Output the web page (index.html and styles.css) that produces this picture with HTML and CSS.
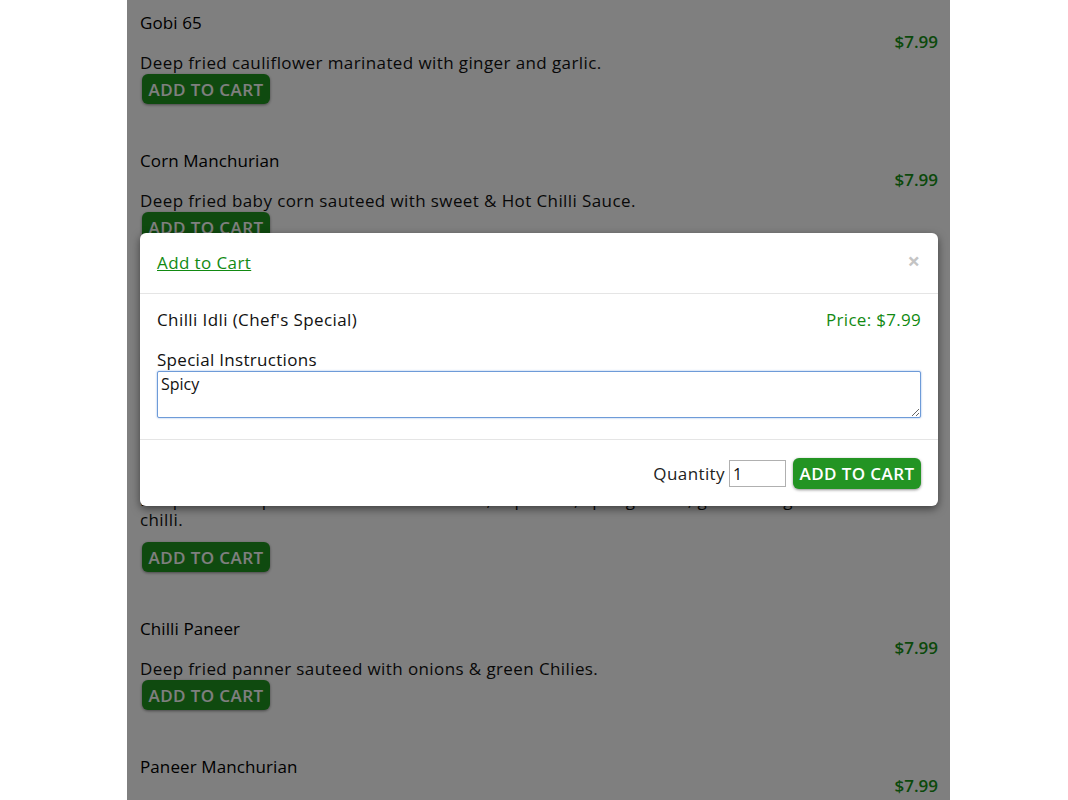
FILE: index.html
```html
<!DOCTYPE html>
<html>
<head>
<meta charset="utf-8">
<title>Menu</title>
<link rel="stylesheet" href="styles.css">
</head>
<body>
<div class="menu">
  <div class="item">
    <div class="item-main">
      <h4 class="name">Gobi 65</h4>
      <p class="desc">Deep fried cauliflower marinated with ginger and garlic.</p>
      <button class="btn">ADD TO CART</button>
    </div>
    <div class="price">$7.99</div>
  </div>
  <div class="item">
    <div class="item-main">
      <h4 class="name">Corn Manchurian</h4>
      <p class="desc">Deep fried baby corn sauteed with sweet &amp; Hot Chilli Sauce.</p>
      <button class="btn">ADD TO CART</button>
    </div>
    <div class="price">$7.99</div>
  </div>
  <div class="item">
    <div class="item-main">
      <h4 class="name">Baby Corn Pepper Fry</h4>
      <p class="desc">Baby corn tossed with crushed black pepper and curry leaves.</p>
      <button class="btn">ADD TO CART</button>
    </div>
    <div class="price">$7.99</div>
  </div>
  <div class="item item-tall">
    <div class="item-main">
      <h4 class="name">Chilli Idli (Chef's Special)</h4>
      <p class="desc">Deep fried idli pieces sauteed with onions, capsicum, spring onion, garlic and green<br>chilli.</p>
      <button class="btn">ADD TO CART</button>
    </div>
    <div class="price">$7.99</div>
  </div>
  <div class="item">
    <div class="item-main">
      <h4 class="name">Chilli Paneer</h4>
      <p class="desc">Deep fried panner sauteed with onions &amp; green Chilies.</p>
      <button class="btn">ADD TO CART</button>
    </div>
    <div class="price">$7.99</div>
  </div>
  <div class="item">
    <div class="item-main">
      <h4 class="name">Paneer Manchurian</h4>
      <p class="desc">Deep fried paneer sauteed with Manchurian sauce.</p>
      <button class="btn">ADD TO CART</button>
    </div>
    <div class="price">$7.99</div>
  </div>

  <div class="backdrop"></div>

  <div class="modal">
    <div class="modal-header">
      <a class="modal-title" href="#">Add to Cart</a>
      <span class="close">&times;</span>
    </div>
    <div class="modal-body">
      <div class="modal-row">
        <span class="dish">Chilli Idli (Chef's Special)</span>
        <span class="modal-price">Price: $7.99</span>
      </div>
      <label class="label" for="notes">Special Instructions</label>
      <textarea id="notes" class="notes">Spicy</textarea>
    </div>
    <div class="modal-footer">
      <span class="qty-label">Quantity</span>
      <input class="qty" type="text" value="1">
      <button class="btn btn-modal">ADD TO CART</button>
    </div>
  </div>
</div>
</body>
</html>
```

FILE: styles.css
```css
html, body {
  margin: 0;
  padding: 0;
  background: #fff;
}

body {
  font-family: "Open Sans", "Noto Sans", sans-serif;
  color: #111;
  overflow: hidden;
}

.menu {
  position: relative;
  margin-left: 127px;
  width: 823px;
  box-sizing: border-box;
  padding: 10px 12px 0 13px;
  background: #fff;
}

.item {
  display: flex;
  justify-content: space-between;
  padding-bottom: 44px;
}

.item-tall {
  margin-top: 23px;
}

.item-main {
  flex: 1;
  max-width: 740px;
}

.name {
  margin: 0;
  padding-top: 1px;
  font-size: 17px;
  font-weight: 500;
  line-height: 24px;
  letter-spacing: 0.1px;
  color: #000;
}

.desc {
  margin: 18px 0 1px;
  font-size: 17px;
  line-height: 20px;
  letter-spacing: 0.4px;
  white-space: nowrap;
}

.item-tall .desc {
  margin-bottom: 12px;
}

.price {
  margin-top: 20px;
  font-size: 17px;
  font-weight: 600;
  line-height: 24px;
  color: #169216;
}

.btn {
  display: block;
  margin-left: 2px;
  width: 128px;
  height: 30px;
  padding: 0;
  border: none;
  border-radius: 6px;
  background: #1f951f;
  color: #fff;
  font-family: "Open Sans", "Noto Sans", sans-serif;
  font-size: 17px;
  font-weight: 600;
  letter-spacing: 0.4px;
  box-shadow: 0 1px 3px rgba(0, 0, 0, 0.45);
}

.backdrop {
  position: absolute;
  inset: 0;
  background: rgba(0, 0, 0, 0.5);
}

.modal {
  position: absolute;
  top: 233px;
  left: 13px;
  width: 798px;
  background: #fff;
  border-radius: 6px;
  box-shadow: 0 3px 9px rgba(0, 0, 0, 0.5);
}

.modal-header {
  display: flex;
  justify-content: space-between;
  align-items: center;
  padding: 18px 17px;
  border-bottom: 1px solid #e5e5e5;
}

.modal-title {
  font-size: 17px;
  line-height: 24px;
  letter-spacing: 0.4px;
  color: #128a12;
  text-decoration: underline;
}

.close {
  font-size: 22px;
  font-weight: 700;
  line-height: 20px;
  color: #c4c4c4;
  margin-top: -6px;
  margin-right: 1px;
}

.modal-body {
  padding: 14px 17px 21px;
}

.modal-row {
  display: flex;
  justify-content: space-between;
  font-size: 17px;
  line-height: 24px;
}

.dish {
  color: #111;
  letter-spacing: 0.4px;
}

.modal-price {
  color: #128a12;
  font-weight: 500;
  letter-spacing: 0.3px;
}

.label {
  display: block;
  margin-top: 16px;
  font-size: 17px;
  line-height: 23px;
  letter-spacing: 0.3px;
  color: #111;
}

.notes {
  display: block;
  width: 764px;
  height: 47px;
  box-sizing: border-box;
  padding: 1px 3px;
  margin: 0;
  border: 1px solid #6e9bd8;
  border-radius: 2px;
  box-shadow: 0 0 2px rgba(90, 140, 215, 0.7);
  outline: none;
  resize: vertical;
  font-family: "Open Sans", "Noto Sans", sans-serif;
  font-size: 16px;
  line-height: 22px;
  color: #111;
}

.modal-footer {
  display: flex;
  justify-content: flex-end;
  align-items: center;
  padding: 18px 17px 17px;
  border-top: 1px solid #e5e5e5;
}

.qty-label {
  font-size: 17px;
  letter-spacing: 0.4px;
  color: #222;
}

.qty {
  width: 57px;
  height: 27px;
  box-sizing: border-box;
  margin: 0 7px 0 4px;
  padding: 1px 3px;
  border: 1px solid #b0b0b0;
  font-family: "Open Sans", "Noto Sans", sans-serif;
  font-size: 16px;
  color: #111;
}

.btn-modal {
  margin-left: 0;
  height: 31px;
  background: #239423;
}
```
